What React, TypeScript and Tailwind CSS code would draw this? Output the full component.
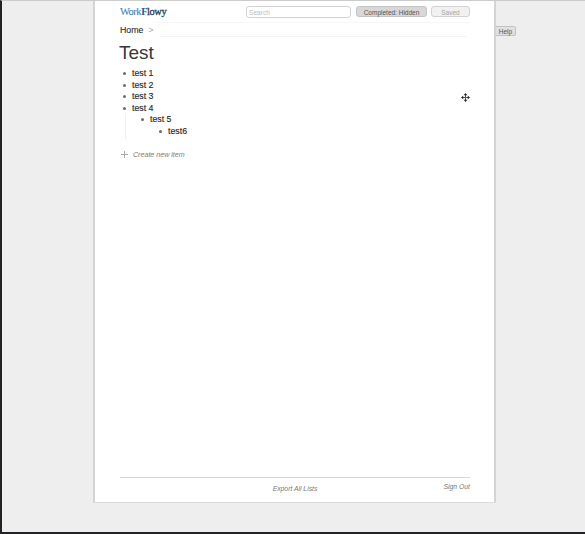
import React from "react";

type Item = { text: string; children?: Item[] };

const items: Item[] = [
  { text: "test 1" },
  { text: "test 2" },
  { text: "test 3" },
  { text: "test 4", children: [{ text: "test 5", children: [{ text: "test6" }] }] },
];

function MoveCursor() {
  return (
    <svg width="9" height="9" viewBox="0 0 9 9" className="ml-auto mt-px">
      <path d="M4.5 1v7M1 4.5h7" stroke="#555" strokeWidth="1" />
      <path
        d="M4.5 0 6.3 2.2H2.7ZM4.5 9 6.3 6.8H2.7ZM0 4.5 2.2 2.7V6.3ZM9 4.5 6.8 2.7V6.3Z"
        fill="#222"
      />
    </svg>
  );
}

function Node({ item, level = 0 }: { item: Item; level?: number }) {
  return (
    <li>
      <div className="flex h-[11.5px] items-center">
        <span className="ml-[3px] mr-[6px] size-[3px] shrink-0 rounded-full bg-[#6c6c6c]" />
        <span className="whitespace-nowrap text-[8.8px] leading-[11px] text-[#2a2a2a] [-webkit-text-stroke:0.15px_#2a2a2a]">
          {item.text}
        </span>
        {item.text === "test 3" && <MoveCursor />}
      </div>
      {item.children && (
        <ul className={level === 0 ? "ml-[5px] border-l border-[#f0f0f0] pb-[3px] pl-[12px]" : "pl-[18px]"}>
          {item.children.map((child) => (
            <Node key={child.text} item={child} level={level + 1} />
          ))}
        </ul>
      )}
    </li>
  );
}

export default function App() {
  return (
    <div className="flex h-[534px] w-[585px] items-start overflow-hidden border-b-2 border-l-2 border-t border-b-[#222224] border-l-[#222224] border-t-[#cbcbcb] bg-[#eeeeee] font-['Liberation_Sans',Arial,sans-serif]">
      <main className="ml-[91px] flex h-[502px] w-[403px] shrink-0 flex-col border-x-2 border-b border-[#d4d4d4] border-b-[#dcdcdc] bg-white pl-[25px] pr-[24px]">
        <header className="flex h-[21px] items-start pt-[5px]">
          <h2 className="w-[126px] whitespace-nowrap font-['Liberation_Serif',serif] text-[10.4px] leading-[12px] tracking-[-0.42px] text-[#1d3d61]">
            <span className="text-[#4b86bd] [-webkit-text-stroke:0.15px_#4b86bd]">Work</span>
            <span className="font-bold text-[#245a96]">F</span>
            <span className="[-webkit-text-stroke:0.3px_#1d3d61]">lowy</span>
          </h2>
          <div className="flex h-[12px] w-[105px] items-center rounded-[3px] border border-[#d2d2d2] pl-[2px] pt-px text-[6.6px] leading-[9px] text-[#bdbdbd]">
            Search
          </div>
          <button className="ml-[5px] flex h-[11px] w-[71px] items-center justify-center whitespace-nowrap rounded-[3px] border border-[#c4c4c4] bg-[#d8d8d8] pt-px text-[6.5px] leading-[7px] text-[#555]">
            Completed: Hidden
          </button>
          <button className="ml-[4px] flex h-[11px] w-[39px] items-center justify-center rounded-[3px] border border-[#d2d2d2] bg-[#f1f1f1] pt-px text-[6.5px] leading-[7px] text-[#a5a5a5]">
            Saved
          </button>
        </header>
        <div className="ml-[35px] h-px bg-[#f7f7f7]" />
        <nav className="flex h-[13px] items-center pt-px text-[8.8px] leading-[10px] text-[#2a2a2a]">
          <span className="[-webkit-text-stroke:0.1px_#2a2a2a]">Home</span>
          <span className="ml-[5px] text-[8.5px] text-[#aaa]">&gt;</span>
        </nav>
        <div className="ml-[40px] mr-[3px] h-px bg-[#f3f3f3]" />
        <h1 className="-ml-px mt-[5px] h-[26px] text-[19px] leading-[21px] text-[#383838]">Test</h1>
        <ul>
          {items.map((item) => (
            <Node key={item.text} item={item} />
          ))}
        </ul>
        <div className="mt-[9px] flex h-[12px] items-center">
          <svg width="7" height="7" viewBox="0 0 7 7" className="mb-px ml-[1px] mr-[5px] shrink-0">
            <path d="M3.5 0v7M0 3.5h7" stroke="#aaa" strokeWidth="1" />
          </svg>
          <span className="mt-[2px] whitespace-nowrap text-[7.1px] italic leading-none text-[#7c7c7c]">
            Create new item
          </span>
        </div>
        <footer className="mt-auto grid h-[25px] grid-cols-3 border-t border-[#d8d8d8] text-[6.8px] italic leading-[9px] text-[#777]">
          <span className="col-start-2 mt-[6px] text-center">Export All Lists</span>
          <span className="mt-[4px] text-right">Sign Out</span>
        </footer>
      </main>
      <button className="mt-[25px] flex h-[10px] w-[20px] items-center justify-center rounded-r-[2px] border border-l-0 border-[#c2c2c2] bg-[#e0e0e0] pt-px text-[6.5px] leading-[7px] text-[#555]">
        Help
      </button>
    </div>
  );
}
